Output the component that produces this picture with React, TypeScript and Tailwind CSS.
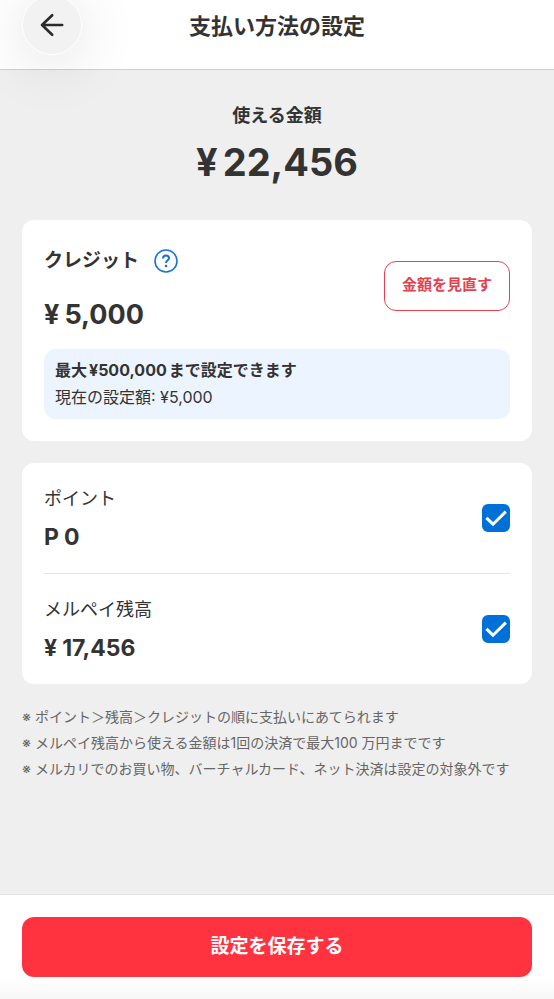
import { useState } from 'react'
import type { ReactNode } from 'react'

interface SourceRowProps {
  id: string
  label: string
  unit: string
  amount: string
  checked: boolean
  onChange: (checked: boolean) => void
}

const notes = [
  'ポイント＞残高＞クレジットの順に支払いにあてられます',
  'メルペイ残高から使える金額は1回の決済で最大100 万円までです',
  'メルカリでのお買い物、バーチャルカード、ネット決済は設定の対象外です',
]

function Amount({ unit, children }: { unit: string; children: ReactNode }) {
  return (
    <>
      <span className="mr-[5px]">{unit}</span>
      {children}
    </>
  )
}

function SourceRow({ id, label, unit, amount, checked, onChange }: SourceRowProps) {
  return (
    <div className="flex items-center justify-between py-[22px]">
      <label htmlFor={id} className="block">
        <span className="block text-[18px] leading-7">{label}</span>
        <span className="mt-2.5 block text-[23px] leading-7 font-bold">
          <Amount unit={unit}>{amount}</Amount>
        </span>
      </label>
      <span className="relative block h-7 w-7 shrink-0">
        <input
          id={id}
          type="checkbox"
          checked={checked}
          onChange={(e) => onChange(e.target.checked)}
          className="peer block h-7 w-7 appearance-none rounded-md border-2 border-gray-300 bg-white checked:border-[#0070d9] checked:bg-[#0070d9]"
        />
        <svg
          className="pointer-events-none absolute inset-0 hidden h-7 w-7 peer-checked:block"
          viewBox="0 0 28 28"
          fill="none"
          stroke="white"
          strokeWidth="3"
        >
          <path d="M4.4 13.8L11 20.2L23.8 7.6" />
        </svg>
      </span>
    </div>
  )
}

export default function App() {
  const [usePoints, setUsePoints] = useState(true)
  const [useBalance, setUseBalance] = useState(true)

  return (
    <div className="flex min-h-screen flex-col overflow-hidden bg-[#efefef] font-['Inter','Noto_Sans_CJK_JP',sans-serif] text-[#333333]">
      <header className="relative z-10 -mt-1 grid grid-cols-[60px_1fr_60px] items-center border-b border-[#cfcfcf] bg-white px-[22px] pb-[14px]">
        <button
          type="button"
          aria-label="戻る"
          className="-mt-px flex h-[60px] w-[60px] items-center justify-center rounded-full border border-white bg-[#f2f2f2] shadow-[0_8px_60px_rgba(0,0,0,0.13)]"
        >
          <svg className="h-6 w-6" viewBox="0 0 24 24" fill="none" stroke="#2b2b2b" strokeWidth="2.6" strokeLinecap="round" strokeLinejoin="round">
            <path d="M22.2 12H2M12.2 2.2L2 12L12.2 21.8" />
          </svg>
        </button>
        <h1 className="text-center text-[22px] leading-8 font-bold">支払い方法の設定</h1>
      </header>

      <main className="flex-1 px-[22px] pt-[34px] pb-8">
        <section className="text-center">
          <h2 className="text-[18px] leading-6 font-bold">使える金額</h2>
          <p className="mt-2.5 text-[38px] leading-12 font-bold">
            <Amount unit="¥">22,456</Amount>
          </p>
        </section>

        <section className="mt-[34px] rounded-xl bg-white p-[22px]">
          <div className="flex items-center justify-between">
            <div>
              <div className="flex h-[38px] items-center gap-[15px]">
                <h2 className="text-[19px] leading-7 font-bold">クレジット</h2>
                <button type="button" aria-label="クレジットについて">
                  <svg className="h-6 w-6" viewBox="0 0 24 24" fill="none" stroke="#1a73d1" strokeWidth="1.6">
                    <circle cx="12" cy="12" r="11" />
                    <path d="M9 9.4C9 7.6 10.2 6.6 12 6.6S15 7.6 15 9.2C15 11.3 12 11.4 12 14" strokeWidth="2" />
                    <circle cx="12" cy="17" r="1.3" fill="#1a73d1" stroke="none" />
                  </svg>
                </button>
              </div>
              <p className="mt-[21px] text-[27px] leading-7 font-bold">
                <Amount unit="¥">5,000</Amount>
              </p>
            </div>
            <button
              type="button"
              className="h-[50px] rounded-xl border border-[#e5404d] px-[17px] text-[15px] font-bold text-[#e5404d]"
            >
              金額を見直す
            </button>
          </div>
          <div className="mt-5 rounded-xl bg-[#ecf5ff] px-[11px] py-2 text-[16px] leading-[27px]">
            <p className="font-bold">
              最大<span className="mx-0.5">¥500,000</span>まで設定できます
            </p>
            <p>現在の設定額: ¥5,000</p>
          </div>
        </section>

        <section className="mt-[22px] divide-y divide-[#e5e5e5] rounded-xl bg-white px-[22px]">
          <SourceRow id="points" label="ポイント" unit="P" amount="0" checked={usePoints} onChange={setUsePoints} />
          <SourceRow id="balance" label="メルペイ残高" unit="¥" amount="17,456" checked={useBalance} onChange={setUseBalance} />
        </section>

        <ul className="mt-5 text-[14px] leading-[26px] text-[#666666]">
          {notes.map((note) => (
            <li key={note}>
              <span className="mr-1">※</span>
              {note}
            </li>
          ))}
        </ul>
      </main>

      <footer className="border-t border-[#e2e2e2] bg-linear-to-b from-white from-80% to-[#f7f7f7] px-[22px] py-[22px]">
        <button type="button" className="h-[60px] w-full rounded-xl bg-[#ff333f] text-[19px] font-bold text-white">
          設定を保存する
        </button>
      </footer>
    </div>
  )
}
